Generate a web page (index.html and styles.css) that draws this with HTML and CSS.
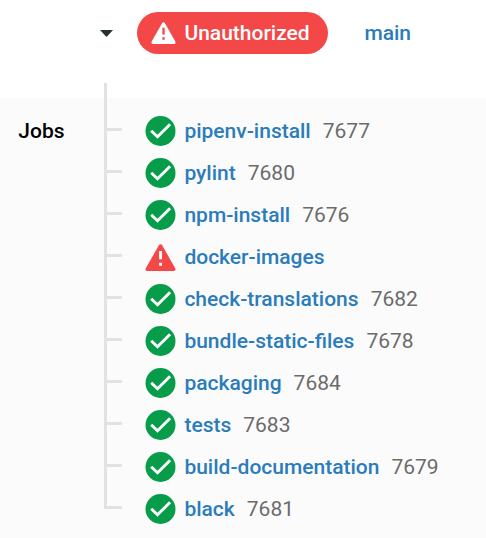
FILE: index.html
```html
<!DOCTYPE html>
<html lang="en">
<head>
<meta charset="utf-8">
<title>Jobs</title>
<link rel="stylesheet" href="styles.css">
</head>
<body>
<svg class="defs" aria-hidden="true">
  <symbol id="check" viewBox="0 0 30 30">
    <circle cx="15" cy="15" r="15" fill="#069c49"/>
    <path d="M5.7 14.7 12 20.8 24.6 8.2" fill="none" stroke="#fff" stroke-width="2.9"/>
  </symbol>
  <symbol id="warning" viewBox="0 0 30 27">
    <path d="M13.4 1.2Q15-.8 16.6 1.2L29.7 24.2Q30.8 26.7 28.3 27H1.7Q-.8 26.7.3 24.2Z" fill="currentColor"/>
    <path class="mark" d="M13.6 7h2.9v8.2h-2.9zM13.6 18.7h2.9v3h-2.9z"/>
  </symbol>
</svg>
<header class="header">
  <svg class="caret" viewBox="0 0 13 7"><path d="M0 0h13L6.5 7z"/></svg>
  <span class="status"><svg class="status-icon" viewBox="0 0 30 27"><use href="#warning"/></svg>Unauthorized</span>
  <a class="link">main</a>
</header>
<main class="jobs">
  <h2 class="title">Jobs</h2>
  <ul class="tree"><li></li><li></li><li></li><li></li><li></li><li></li><li></li><li></li><li></li><li></li></ul>
  <ul class="list">
    <li><svg class="ok"><use href="#check"/></svg><a class="link">pipenv-install</a><span class="num">7677</span></li>
    <li><svg class="ok"><use href="#check"/></svg><a class="link">pylint</a><span class="num">7680</span></li>
    <li><svg class="ok"><use href="#check"/></svg><a class="link">npm-install</a><span class="num">7676</span></li>
    <li><svg class="fail"><use href="#warning"/></svg><a class="link">docker-images</a></li>
    <li><svg class="ok"><use href="#check"/></svg><a class="link">check-translations</a><span class="num">7682</span></li>
    <li><svg class="ok"><use href="#check"/></svg><a class="link">bundle-static-files</a><span class="num">7678</span></li>
    <li><svg class="ok"><use href="#check"/></svg><a class="link">packaging</a><span class="num">7684</span></li>
    <li><svg class="ok"><use href="#check"/></svg><a class="link">tests</a><span class="num">7683</span></li>
    <li><svg class="ok"><use href="#check"/></svg><a class="link">build-documentation</a><span class="num">7679</span></li>
    <li><svg class="ok"><use href="#check"/></svg><a class="link">black</a><span class="num">7681</span></li>
  </ul>
</main>
</body>
</html>
```
FILE: styles.css
```css
* { box-sizing: border-box; }
body {
  margin: 0;
  height: 538px;
  overflow: hidden;
  background: #fff;
  font: 500 21px/42px Roboto, sans-serif;
  color: #000;
}
.defs { display: block; width: 0; height: 0; }
.header { display: flex; height: 98px; padding: 12px 0 0 100px; align-items: flex-start; }
.caret { width: 13px; height: 7px; margin: 18px 24px 0 0; fill: #263034; }
.status {
  display: flex;
  align-items: center;
  width: 191px;
  height: 42px;
  padding-left: 14px;
  border-radius: 21px;
  background: #f34748;
  color: #fff;
}
.status-icon { width: 25px; height: 22px; margin-right: 8.4px; --mark: #f34748; }
.mark { fill: var(--mark, #fff); }
.status + .link { margin-left: 36.4px; }
.link { color: #2b7cba; }
.jobs {
  display: grid;
  grid-template-columns: 86px 40px 1fr;
  height: 440px;
  padding-left: 18px;
  background: #fbfbfb;
}
.title { margin: 12px 0 0 0.3px; font: inherit; }
.tree, .list { margin: 0; padding: 0; list-style: none; }
.tree { width: 18px; height: 426px; margin-top: -15px; padding-top: 6px; border-left: 3px solid #e2e2e2; }
.tree li { height: 42px; border-bottom: 3px solid #e2e2e2; }
.list { padding-top: 12px; }
.list li { display: flex; height: 42px; align-items: center; }
.ok, .fail { width: 31px; height: 30px; margin: 0 8.4px 0 1px; }
.fail { height: 27px; color: #f34748; }
.num { margin-left: 12px; color: #6b6b6b; font-weight: 400; }
```
